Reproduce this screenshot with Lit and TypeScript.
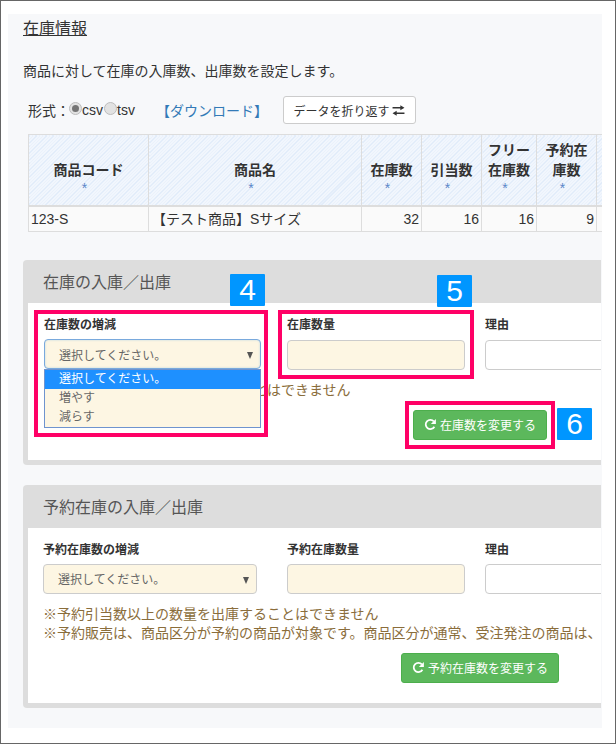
import { LitElement, html, css } from "lit";
import { customElement } from "lit/decorators.js";

const repeatIcon = html`<svg class="ic" viewBox="0 0 14 14" width="13" height="13" aria-hidden="true">
  <path d="M11.2 9.4A5 5 0 1 1 10.6 3.6" fill="none" stroke="currentColor" stroke-width="1.9"/>
  <path d="M12.8 1v5.4H7.4z" fill="currentColor"/>
</svg>`;

const transferIcon = html`<svg class="ic" viewBox="0 0 14 12" width="13" height="11" aria-hidden="true">
  <path d="M.5 2.2h8.5V.2l4.5 2.8L9 5.8v-2H.5zM13.5 8.2H5v-2L.5 9 5 11.8v-2h8.5z" fill="currentColor"/>
</svg>`;

@customElement("app-root")
export class AppRoot extends LitElement {
  static styles = css`
    :host {
      display: block;
      position: relative;
      width: 616px;
      height: 744px;
      box-sizing: border-box;
      border: 1px solid #666;
      background: #fff;
      padding: 13px 13px 14px 7px;
      overflow: hidden;
      font-family: "Liberation Sans", "Noto Sans CJK JP", sans-serif;
      font-size: 14px;
      color: #333;
    }
    * { box-sizing: border-box; }
    .page {
      height: 714px;
      background: #f7f8fa;
      padding: 5px 0 0 15px;
      overflow: hidden;
    }
    .title { margin: 0; font-size: 16px; font-weight: 400; line-height: 20px; text-decoration: underline; }
    .lead { margin: 22px 0 0; line-height: 20px; }
    .format { display: flex; align-items: center; height: 28px; margin: 15px 0 0 5px; }
    .radio {
      width: 13px; height: 13px; border-radius: 50%; margin: 0 0 3px 0;
      border: 1px solid #bdbdbd; background: #e2e2e2; flex: none;
      display: flex; align-items: center; justify-content: center;
    }
    .radio.on { margin-left: -1px; }
    .radio.on::after { content: ""; width: 7px; height: 7px; border-radius: 50%; background: #757575; }
    .opt { margin-right: 1px; }
    .link { color: #337ab7; margin-left: 21px; width: 127px; flex: none; }
    .wrap-btn {
      display: inline-flex; align-items: center; gap: 3px; height: 28px; width: 133px; justify-content: center;
      border: 1px solid #ccc; border-radius: 3px; background: #fff; color: #333;
      font: inherit; font-size: 12px; padding: 0;
    }
    .ic { flex: none; display: block; }
    table {
      border-collapse: collapse; table-layout: fixed; width: 628px;
      margin: 10px 0 0 5px;
    }
    th, td { border: 1px solid #ddd; padding: 0 2px; }
    th {
      height: 71px; font-size: 14px; line-height: 20px; text-align: center; vertical-align: bottom;
      border-bottom-width: 2px; padding: 0 5px 8px;
      background: repeating-linear-gradient(135deg, #dce8f8 0 1px, #f8fafe 1px 2.4px);
    }
    th .star { display: block; color: #5a86c9; font-weight: 400; font-size: 14px; line-height: 17px; padding-right: 8px; }
    td { height: 26px; background: #fafafa; line-height: 20px; }
    td.name { padding-left: 3px; }
    td.num { text-align: right; }
    .panel {
      margin: 28px 0 0 0;
      background: #ddd;
      border-radius: 4px 0 0 4px;
      padding: 0 0 5px 5px;
      width: 578px;
    }
    .panel.second { margin-top: 20px; }
    .head {
      height: 43px; margin-left: -5px; padding: 12px 0 0 20px;
      font-size: 16px; line-height: 22px; color: #555;
    }
    .body { background: #fff; padding: 12px 0 20px 15px; overflow: hidden; }
    .row { display: flex; align-items: flex-start; }
    .col { flex: none; }
    .c1 { width: 214px; margin-right: 30px; }
    .c2 { width: 178px; margin-right: 20px; }
    .c3 { width: 200px; }
    label { display: block; font-size: 12px; font-weight: 700; line-height: 20px; margin-bottom: 4px; color: #333; white-space: nowrap; }
    .first label { margin-bottom: 5px; }
    .first .c1 { padding-left: 1px; }
    .select, input {
      display: block; height: 30px; border: 1px solid #ccc; border-radius: 4px;
      font: inherit; font-size: 12px; width: 100%;
    }
    .select {
      position: relative; display: flex; align-items: center;
      background: #fdf6e3; color: #666; padding-left: 14px;
    }
    .select::after {
      content: ""; position: absolute; right: 7px; top: 12px;
      border-left: 3.5px solid transparent; border-right: 3.5px solid transparent; border-top: 7px solid #555;
    }
    .select.open { width: 217px; margin-top: -1px; border-color: #79a9dd; box-shadow: inset 0 0 2px rgba(102,175,233,.5); }
    .select.open .menu {
      position: absolute; left: -1px; top: 29px; width: 217px; height: 59px; z-index: 2;
      border: 1px solid #6f94cf; background: #fdf6e3;
      font-size: 12px; color: #666;
    }
    .menu div { height: 19px; line-height: 19px; padding-left: 14px; }
    .menu div.sel { background: #1e90ff; color: #fff; }
    input.req { background: #fdf6e3; }
    input.free { background: #fff; }
    .note { margin: 11px 0 0; color: #8a6d3b; line-height: 19.5px; white-space: nowrap; }
    .actions { display: flex; justify-content: flex-end; margin-top: 9px; }
    .go {
      display: inline-flex; align-items: center; justify-content: center; gap: 3px;
      height: 30px; background: #5cb85c; border: 1px solid #4cae4c; border-radius: 3px;
      color: #fff; font: inherit; font-size: 12px; padding: 0;
    }
    .go.a { width: 134px; margin-right: 54px; }
    .go.b { width: 158px; margin-right: 42px; }
    .mark { position: absolute; border: 4px solid #ff0066; z-index: 3; pointer-events: none; }
    .m4 { left: 33px; top: 309px; width: 234px; height: 127px; }
    .m5 { left: 277px; top: 309px; width: 196px; height: 69px; }
    .m6 { left: 404px; top: 400px; width: 150px; height: 48px; }
    .badge {
      position: absolute; z-index: 4; width: 35px; height: 32px; background: #0096ff; border-radius: 1px;
      color: #fff; font-size: 30px; line-height: 32px; text-align: center;
    }
    .b4 { left: 229px; top: 273px; }
    .b5 { left: 436px; top: 274px; }
    .b6 { left: 556px; top: 407px; }
  `;

  render() {
    return html`
      <div class="page">
        <h1 class="title">在庫情報</h1>
        <p class="lead">商品に対して在庫の入庫数、出庫数を設定します。</p>
        <div class="format">
          <span>形式：</span>
          <span class="radio on"></span><span class="opt">csv</span>
          <span class="radio"></span><span>tsv</span>
          <span class="link">【ダウンロード】</span>
          <button class="wrap-btn">データを折り返す ${transferIcon}</button>
        </div>
        <table>
          <colgroup>
            <col style="width:120px" /><col style="width:213px" /><col style="width:60px" />
            <col style="width:60px" /><col style="width:55px" /><col style="width:60px" /><col style="width:60px" />
          </colgroup>
          <thead>
            <tr>
              <th>商品コード<span class="star">*</span></th>
              <th>商品名<span class="star">*</span></th>
              <th>在庫数<span class="star">*</span></th>
              <th>引当数<span class="star">*</span></th>
              <th>フリー在庫数<span class="star">*</span></th>
              <th>予約在庫数<span class="star">*</span></th>
              <th></th>
            </tr>
          </thead>
          <tbody>
            <tr>
              <td>123-S</td>
              <td class="name">【テスト商品】Sサイズ</td>
              <td class="num">32</td>
              <td class="num">16</td>
              <td class="num">16</td>
              <td class="num">9</td>
              <td></td>
            </tr>
          </tbody>
        </table>

        <section class="panel first">
          <div class="head">在庫の入庫／出庫</div>
          <div class="body">
            <div class="row">
              <div class="col c1">
                <label>在庫数の増減</label>
                <div class="select open">選択してください。
                  <div class="menu">
                    <div class="sel">選択してください。</div>
                    <div>増やす</div>
                    <div>減らす</div>
                  </div>
                </div>
              </div>
              <div class="col c2"><label>在庫数量</label><input class="req" /></div>
              <div class="col c3"><label>理由</label><input class="free" /></div>
            </div>
            <p class="note">※引当数以上の数量を出庫することはできません</p>
            <div class="actions"><button class="go a">${repeatIcon}在庫数を変更する</button></div>
          </div>
        </section>

        <section class="panel second">
          <div class="head">予約在庫の入庫／出庫</div>
          <div class="body">
            <div class="row">
              <div class="col c1">
                <label>予約在庫数の増減</label>
                <div class="select">選択してください。</div>
              </div>
              <div class="col c2"><label>予約在庫数量</label><input class="req" /></div>
              <div class="col c3"><label>理由</label><input class="free" /></div>
            </div>
            <p class="note">※予約引当数以上の数量を出庫することはできません<br />※予約販売は、商品区分が予約の商品が対象です。商品区分が通常、受注発注の商品は、</p>
            <div class="actions"><button class="go b">${repeatIcon}予約在庫数を変更する</button></div>
          </div>
        </section>
      </div>
      <div class="mark m4"></div>
      <div class="mark m5"></div>
      <div class="mark m6"></div>
      <div class="badge b4">4</div>
      <div class="badge b5">5</div>
      <div class="badge b6">6</div>
    `;
  }
}
